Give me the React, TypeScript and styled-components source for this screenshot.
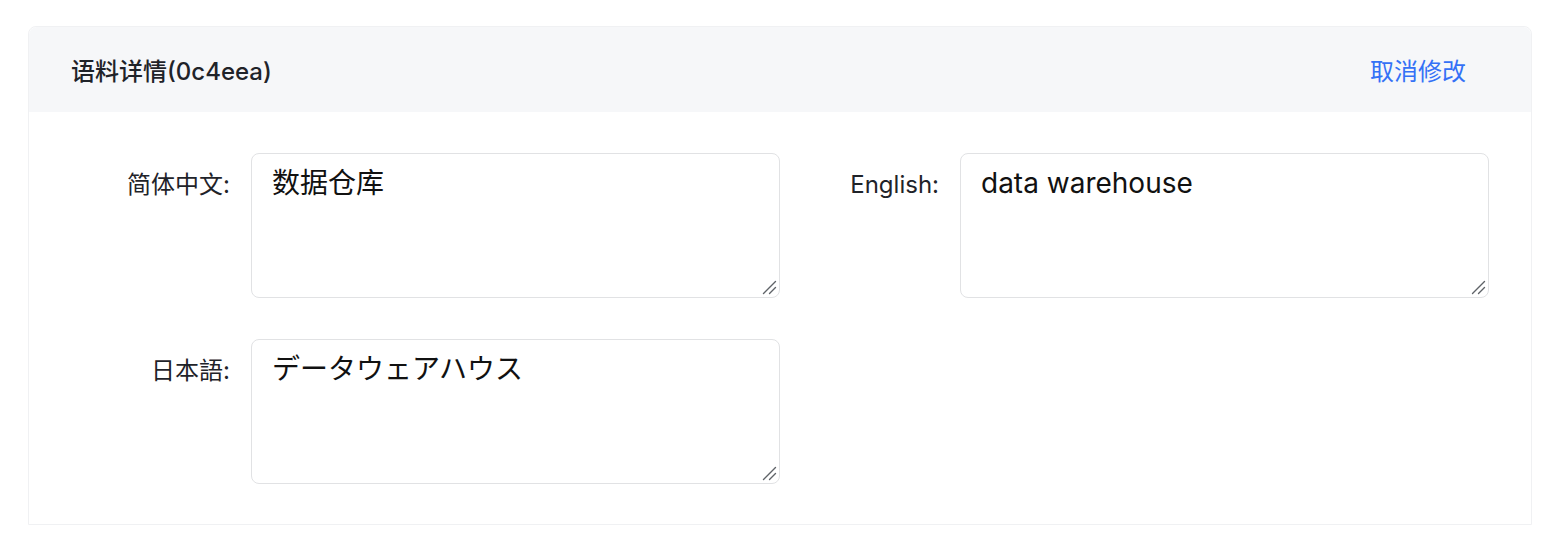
import styled, { createGlobalStyle } from 'styled-components'

const GlobalStyle = createGlobalStyle`
    body {
        margin: 0;
        background: #ffffff;
        font-family: Inter, "Noto Sans CJK SC", sans-serif;
    }
`

const Card = styled.section`
    margin: 26px 18px 0 28px;
    border: 1px solid #f0f1f3;
    border-radius: 8px 8px 0 0;
    background: #ffffff;
`

const Header = styled.header`
    display: flex;
    align-items: center;
    justify-content: space-between;
    height: 85px;
    padding: 0 65px 0 42px;
    background: #f6f7f9;
    border-radius: 8px 8px 0 0;
`

const Title = styled.h2`
    margin: 0;
    font-size: 24px;
    font-weight: 500;
    color: #1f2329;
`

const CancelLink = styled.a`
    font-size: 24px;
    color: #3471f6;
    cursor: pointer;
    text-decoration: none;
`

const Body = styled.div`
    display: grid;
    grid-template-columns: 1fr 1fr;
    row-gap: 41px;
    padding: 41px 42px 40px;
`

const Field = styled.div`
    display: flex;
    align-items: flex-start;
    gap: 21px;
`

const Label = styled.label`
    width: 159px;
    flex-shrink: 0;
    padding-top: 14px;
    text-align: right;
    font-size: 24px;
    line-height: 36px;
    color: #1f2329;
`

const AreaWrap = styled.div`
    position: relative;
    display: flex;
`

const TextArea = styled.textarea`
    box-sizing: border-box;
    width: 529px;
    height: 145px;
    padding: 8px 20px;
    border: 1px solid #e1e2e4;
    border-radius: 8px;
    font-family: Inter, "Noto Sans CJK SC", sans-serif;
    font-size: 28px;
    line-height: 42px;
    color: #111111;
    outline: none;
    resize: none;
`

const Grip = styled.svg`
    position: absolute;
    right: 3px;
    bottom: 3px;
    width: 15px;
    height: 15px;
    pointer-events: none;
`

function ResizeGrip() {
    return (
        <Grip viewBox="0 0 15 15">
            <path d="M1.5 13.5 L13.5 1.5 M7.5 13.5 L13.5 7.5" stroke="#5f6368" strokeWidth="1.4" strokeLinecap="round" />
        </Grip>
    )
}

const fields = [
    { label: '简体中文:', value: '数据仓库', lang: 'zh-CN' },
    { label: 'English:', value: 'data warehouse', lang: 'en' },
    { label: '日本語:', value: 'データウェアハウス', lang: 'ja' },
]

export default function App() {
    return (
        <>
            <GlobalStyle />
            <Card>
                <Header>
                    <Title>语料详情(0c4eea)</Title>
                    <CancelLink>取消修改</CancelLink>
                </Header>
                <Body>
                    {fields.map((f) => (
                        <Field key={f.lang}>
                            <Label>{f.label}</Label>
                            <AreaWrap>
                                <TextArea lang={f.lang} defaultValue={f.value} />
                                <ResizeGrip />
                            </AreaWrap>
                        </Field>
                    ))}
                </Body>
            </Card>
        </>
    )
}
